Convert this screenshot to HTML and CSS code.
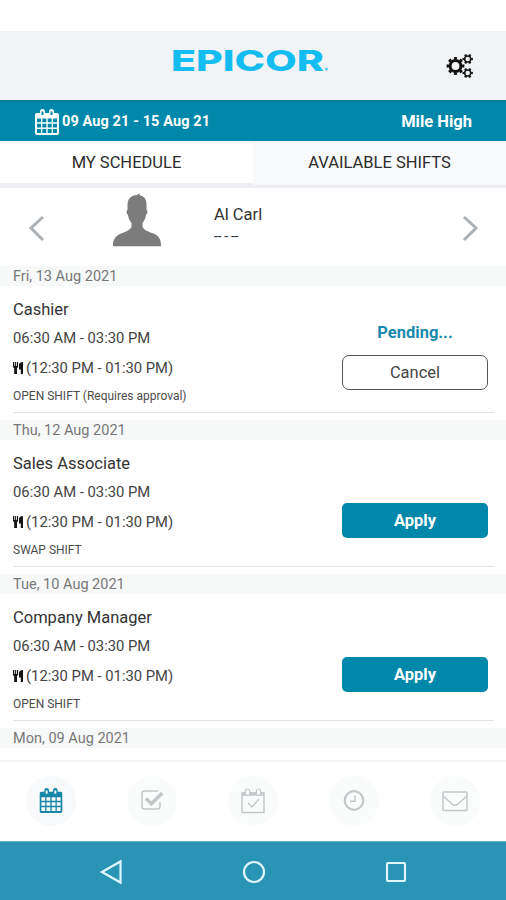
FILE: index.html
```html
<!DOCTYPE html>
<html lang="en">
<head>
<meta charset="utf-8">
<title>Epicor Schedule</title>
<link rel="stylesheet" href="styles.css">
</head>
<body>
<svg class="defs" width="0" height="0">
  <defs>
    <symbol id="fork" viewBox="0 0 11 13">
      <path d="M0 0h1.3v4h.8V0h1v4h.8V0h1.2v4.6c0 .8-.5 1.3-1.1 1.6V12H1.2V6.2C.5 5.900 0 5.400 0 4.600zM6 3c0-2 1.500-3 4-3v12H7.800V7.500H6z" fill="currentColor"/>
    </symbol>
    <symbol id="calendar" viewBox="0 0 24 26">
      <path fill="currentColor" fill-rule="evenodd" d="M2 4h3V2.500a2.500 2.500 0 0 1 5 0V4h4V2.500a2.500 2.500 0 0 1 5 0V4h3a2 2 0 0 1 2 2v18a2 2 0 0 1-2 2H2a2 2 0 0 1-2-2V6a2 2 0 0 1 2-2zM6.500 2.500V6h2V2.500zM15.500 2.500V6h2V2.500zM2 9.500v3.800h4V9.500zM7.300 9.500v3.800h4V9.500zM12.700 9.500v3.800h4V9.500zM18 9.500v3.800h4V9.500zM2 14.700v3.800h4v-3.800zM7.300 14.700v3.800h4v-3.800zM12.700 14.700v3.800h4v-3.800zM18 14.700v3.800h4v-3.800zM2 20v4h4v-4zM7.300 20v4h4v-4zM12.700 20v4h4v-4zM18 20v4h4v-4z"/>
    </symbol>
  </defs>
</svg>
<div class="screen">
  <header class="header">
    <svg class="logo" width="160" height="30" viewBox="0 0 160 30">
      <text class="logo-text" x="0" y="25.500" textLength="153" lengthAdjust="spacingAndGlyphs">EPICOR</text>
      <circle cx="155.500" cy="24" r="1.500" fill="#5bcdf3"/>
    </svg>
    <svg class="gears" width="28" height="26" viewBox="0 0 28 26" fill="none" stroke="#111">
      <circle cx="9.500" cy="13" r="5.400" stroke-width="3"/>
      <circle cx="9.500" cy="13" r="7.700" stroke-width="2.400" pathLength="16" stroke-dasharray="1 1" stroke-dashoffset=".5"/>
      <circle cx="21.700" cy="6" r="3" stroke-width="1.500"/>
      <circle cx="21.700" cy="6" r="4.300" stroke-width="1.800" pathLength="12" stroke-dasharray="1 1" stroke-dashoffset=".5"/>
      <circle cx="21.700" cy="20" r="3" stroke-width="1.500"/>
      <circle cx="21.700" cy="20" r="4.300" stroke-width="1.800" pathLength="12" stroke-dasharray="1 1" stroke-dashoffset=".5"/>
    </svg>
  </header>
  <div class="period">
    <svg class="period-icon" width="24" height="26"><use href="#calendar"/></svg>
    <span class="period-range">09 Aug 21 - 15 Aug 21</span>
    <span class="site">Mile High</span>
  </div>
  <nav class="tabs">
    <div class="tab">MY SCHEDULE</div>
    <div class="tab tab-alt">AVAILABLE SHIFTS</div>
  </nav>
  <section class="employee">
    <svg class="prev" width="18" height="28" viewBox="0 0 18 28"><path class="chevron" d="M15 3 3 14l12 12"/></svg>
    <svg class="avatar" width="50" height="54" viewBox="0 0 50 54"><path fill="#7c7c7c" d="M15.500 11C16 5 20 2 25 2l3-2-.7 2C32 3 34.500 6 34.500 11v6c1.500 0 1 4-.5 5-.6 4-2 6-3.500 8v4c2 4 8 5 12 7 4 2 6.500 5 6.500 11v1.200H1V52c0-6 3-9 7-11s9.500-3 11.500-7v-4c-1.500-2-3-4-3.500-8-1.500-1-2-5-.5-5z"/></svg>
    <div class="person">
      <div class="name">Al Carl</div>
      <div class="dashes">-- - --</div>
    </div>
    <svg class="next" width="18" height="28" viewBox="0 0 18 28"><path class="chevron" d="m3 3 12 11L3 26"/></svg>
  </section>
  <main class="shifts">
    <h2 class="day"><span class="w105">Fri, 13 Aug 2021</span></h2>
    <article class="shift">
      <div class="info">
        <div class="role">Cashier</div>
        <div class="time">06:30 AM - 03:30 PM</div>
        <div class="meal"><svg class="fork" width="11" height="13"><use href="#fork"/></svg>(12:30 PM - 01:30 PM)</div>
        <div class="kind approval">OPEN SHIFT (Requires approval)</div>
      </div>
      <div class="actions">
        <div class="pending">Pending...</div>
        <button class="button cancel">Cancel</button>
      </div>
    </article>
    <h2 class="day">Thu, 12 Aug 2021</h2>
    <article class="shift">
      <div class="info">
        <div class="role">Sales Associate</div>
        <div class="time">06:30 AM - 03:30 PM</div>
        <div class="meal"><svg class="fork" width="11" height="13"><use href="#fork"/></svg>(12:30 PM - 01:30 PM)</div>
        <div class="kind">SWAP SHIFT</div>
      </div>
      <div class="actions"><button class="button apply">Apply</button></div>
    </article>
    <h2 class="day">Tue, 10 Aug 2021</h2>
    <article class="shift">
      <div class="info">
        <div class="role">Company Manager</div>
        <div class="time">06:30 AM - 03:30 PM</div>
        <div class="meal"><svg class="fork" width="11" height="13"><use href="#fork"/></svg>(12:30 PM - 01:30 PM)</div>
        <div class="kind">OPEN SHIFT</div>
      </div>
      <div class="actions"><button class="button apply">Apply</button></div>
    </article>
    <h2 class="day">Mon, 09 Aug 2021</h2>
  </main>
  <nav class="menu">
    <div class="item active"><svg width="24" height="25" viewBox="0 0 24 26"><use href="#calendar"/></svg></div>
    <div class="item"><svg width="24" height="24" viewBox="0 0 24 24" fill="none" stroke="currentColor"><path stroke-width="1.500" d="M20 13v4.500a2.500 2.500 0 0 1-2.500 2.500h-13A2.500 2.500 0 0 1 2 17.500v-13A2.500 2.500 0 0 1 4.500 2H18"/><path stroke-width="3.600" d="m6 9.500 5.300 5.200L22.300 4"/></svg></div>
    <div class="item"><svg width="24" height="26" viewBox="0 0 24 26" fill="none" stroke="currentColor"><path stroke-width="1.500" d="M1 5h22v19.500H1z"/><path stroke-width="3.500" d="M1 6h22"/><path class="ring" d="M4.500 3a2 2 0 0 1 4 0v4h-4zM15.500 3a2 2 0 0 1 4 0v4h-4z"/><path stroke-width="1.500" d="m7 15 4 4 7-8"/></svg></div>
    <div class="item"><svg width="24" height="24" viewBox="0 0 24 24" fill="none" stroke="currentColor"><circle cx="12" cy="11.500" r="9.300" stroke-width="2.200"/><path stroke-width="1.500" d="M13 6.500v5.700H8"/></svg></div>
    <div class="item"><svg width="26" height="22" viewBox="0 0 26 22" fill="none" stroke="currentColor" stroke-width="1.500"><rect x="1" y="2" width="24" height="18.500" rx="1"/><path d="m1 6 9.500 8.300q2.500 2 5 0L25 6"/></svg></div>
  </nav>
  <footer class="system">
    <svg width="24" height="26" viewBox="0 0 24 26"><path class="key" d="M21.500 2.500v21L3 13z"/></svg>
    <svg width="24" height="24" viewBox="0 0 24 24"><circle class="key" cx="12" cy="12" r="10"/></svg>
    <svg width="24" height="24" viewBox="0 0 24 24"><rect class="key" x="3" y="3" width="18" height="18" rx="1"/></svg>
  </footer>
</div>
</body>
</html>
```
FILE: styles.css
```css
* { box-sizing: border-box; }
body { margin: 0; font-family: Roboto, sans-serif; color: #333; background: #fff; }
.defs { position: absolute; }
svg { display: block; flex: none; }
.screen { width: 506px; height: 900px; padding-top: 31px; display: flex; flex-direction: column; overflow: hidden; }
.header { height: 69px; flex: none; background: #f1f3f5; display: flex; align-items: flex-start; padding: 14px 0 0 171px; }
.logo-text { font: 800 28.500px Inter, sans-serif; fill: #13bdf1; }
.gears { margin: 8px 0 0 115px; }
.period { height: 41px; flex: none; background: #0088aa; border-top: 2px solid #087b98; display: flex; align-items: center; padding: 0 34px 0 35px; color: #fff; font-weight: 700; white-space: nowrap; }
.period-icon { margin-right: 3px; }
.period-range { font-size: 14.500px; letter-spacing: .1px; }
.site { margin-left: auto; font-size: 16.500px; }
.tabs { height: 47px; flex: none; display: grid; grid-template-columns: 1fr 1fr; border-bottom: 5px solid #eeeef3; }
.tab { font-size: 16.500px; line-height: 44px; text-align: center; white-space: nowrap; color: #2c2c2c; }
.tab-alt { background: #f7f9fb; }
.employee { height: 78px; flex: none; display: flex; padding: 0 27px 0 28px; }
.prev, .next { margin-top: 26px; }
.next { margin-left: auto; }
.chevron { fill: none; stroke: #acb1b5; stroke-width: 3; }
.avatar { margin: 5px 0 0 66px; }
.person { margin: 17px 0 0 52px; }
.name { font-size: 16.500px; line-height: 20px; }
.dashes { font-size: 14px; line-height: 20px; letter-spacing: -.3px; margin-top: 1px; }
.shifts { height: 496px; flex: none; border-bottom: 2px solid #f5f7f7; }
.day { margin: 0; height: 20px; padding-left: 13px; background: #f7f9f9; color: #777; font-size: 14.500px; line-height: 21px; font-weight: 400; }
.shift { height: 127px; margin: 0 12px 7px 13px; border-bottom: 1px solid #e2e5e6; display: flex; justify-content: space-between; white-space: nowrap; }
.role { margin-top: 14px; font-size: 16.500px; line-height: 20px; }
.time { margin-top: 8px; font-size: 14.800px; line-height: 20px; color: #444; }
.meal { margin-top: 10px; font-size: 14.800px; line-height: 20px; color: #444; display: flex; align-items: center; gap: 2px; }
.fork { color: #151515; }
.kind { margin-top: 9px; font-size: 12px; line-height: 18px; color: #4c4c4c; }
.actions { width: 146px; margin-right: 6px; display: flex; flex-direction: column; justify-content: center; }
.pending { margin-top: 14px; font-size: 16.500px; line-height: 20px; font-weight: 700; color: #168aae; text-align: center; }
.button { width: 146px; height: 35px; padding: 0; border-radius: 5px; font-family: inherit; font-size: 16.500px; }
.cancel { margin-top: 12px; background: #fff; border: 1.500px solid #555; color: #444; border-radius: 7px; }
.apply { margin-top: 59px; margin-bottom: 25px; background: #0088aa; border: 0; color: #fff; font-weight: 700; }
.menu { height: 79px; flex: none; display: flex; justify-content: space-between; align-items: center; padding: 0 26px; color: #c3c8ca; }
.item { width: 50px; height: 50px; border-radius: 50%; background: #fafcfc; display: flex; align-items: center; justify-content: center; margin-bottom: 2px; }
.active { color: #1687a6; background: #f7f9fa; }
.ring { fill: #fff; stroke-width: 1.200; }
.system { height: 59px; flex: none; background: #2a94b6; border-top: 1px solid #69b5cb; display: flex; align-items: center; justify-content: space-between; padding: 1px 98px 0 99px; }
.key { fill: none; stroke: #e0f7ff; stroke-width: 2.200; }
```
